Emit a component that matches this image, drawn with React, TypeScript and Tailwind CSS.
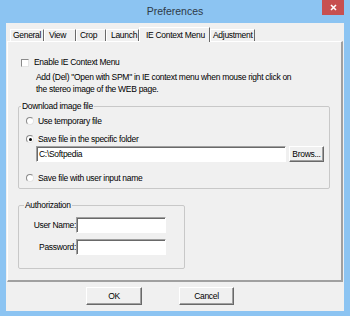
import React from 'react';

// classic win32 dialog, tabs + group boxes

const tabs = [
  { label: 'General', cls: 'w-[34px] pl-[2px]' },
  { label: 'View', cls: 'w-[32px] pl-[4px]' },
  { label: 'Crop', cls: 'w-[30px] pl-[3px]' },
  { label: 'Launch', cls: 'w-[33px] pl-[4px]' },
  { label: 'Adjustment', cls: 'w-[45px] pl-[2px]' },
];

function Tab({ label, cls }: { label: string; cls: string }) {
  return (
    <div className={`${cls} h-[12px] flex items-center leading-none whitespace-nowrap border-t border-l border-r border-t-white border-l-white border-r-[#696969]`}>
      {label}
    </div>
  );
}

function Radio({ checked }: { checked?: boolean }) {
  return (
    <div className="w-[8px] h-[8px] rounded-full bg-white border border-t-[#8a8a8a] border-l-[#8a8a8a] border-b-[#e4e4e4] border-r-[#e4e4e4] flex items-center justify-center shrink-0">
      {checked && <div className="w-[3px] h-[3px] rounded-full bg-black" />}
    </div>
  );
}

function Btn({ label, cls }: { label: string; cls: string }) {
  return (
    <div className={`${cls} flex items-center justify-center leading-none bg-[#f0f0f0] border border-t-white border-l-white border-b-[#696969] border-r-[#696969] shadow-[inset_-1px_-1px_0_#a0a0a0]`}>
      {label}
    </div>
  );
}

function Field({ cls, value }: { cls: string; value?: string }) {
  return (
    <div className={`${cls} bg-white flex items-center pl-[2px] leading-none border border-t-[#a0a0a0] border-l-[#a0a0a0] border-b-white border-r-white shadow-[inset_1px_1px_0_#696969]`}>
      {value}
    </div>
  );
}

export default function App() {
  return (
    <div className="w-[350px] h-[316px] bg-[#8cc4f2] flex flex-col overflow-hidden font-['Liberation_Sans',Arial,sans-serif] text-[8.5px] tracking-[-0.3px] text-black">
      <div className="h-[23px] flex items-start shrink-0">
        <div className="w-[28px]" />
        <div className="flex-1 text-center text-[10.5px] tracking-normal leading-[23px] text-[#2e3a46]">
          Preferences
        </div>
        <div className="w-[22px] h-[15px] bg-[#c75050] flex items-center justify-center">
          <svg width="7" height="7" viewBox="0 0 7 7">
            <path d="M1 1L6 6M6 1L1 6" stroke="white" strokeWidth="1.6" />
          </svg>
        </div>
        <div className="w-[6px]" />
      </div>

      <div className="mx-[6px] h-[288px] bg-[#f0f0f0] flex flex-col shrink-0">
        <div className="h-[18px] flex items-end pl-[4px]">
          {tabs.slice(0, 4).map((t) => (
            <Tab key={t.label} label={t.label} cls={t.cls} />
          ))}
          <div className="relative z-10 -mb-px w-[71px] h-[15px] pl-[6px] flex items-center leading-none whitespace-nowrap bg-[#f0f0f0] border-t border-l border-r border-t-white border-l-white border-r-[#696969]">
            IE Context Menu
          </div>
          <Tab label={tabs[4].label} cls={tabs[4].cls} />
        </div>

        <div className="ml-[1px] w-[336px] h-[241px] flex flex-col border-t border-l border-r-2 border-b-2 border-t-white border-l-white border-r-[#a0a0a0] border-b-[#a0a0a0]">
          <div className="mt-[15px] ml-[13px] h-[11px] flex items-center gap-[5px] leading-[11px]">
            <div className="w-[8px] h-[8px] bg-white border border-t-[#8a8a8a] border-l-[#8a8a8a] border-b-[#e4e4e4] border-r-[#e4e4e4]" />
            <span>Enable IE Context Menu</span>
          </div>
          <div className="mt-[4px] ml-[28px] leading-[11.5px] whitespace-nowrap">
            Add (Del) "Open with SPM" in IE context menu when mouse right click on
            <br />
            the stereo image of the WEB page.
          </div>

          <fieldset className="mt-[5.5px] ml-[10px] w-[312px] min-w-0 border border-[#c8c8c8] rounded-[2px] pb-[4.5px]">
            <legend className="ml-[2px] px-[1px] leading-[11px]">Download image file</legend>
            <div className="flex flex-col">
              <div className="mt-[4px] ml-[7px] h-[11px] flex items-center gap-[4px] leading-[11px]">
                <Radio />
                <span>Use temporary file</span>
              </div>
              <div className="mt-[7px] ml-[7px] h-[11px] flex items-center gap-[4px] leading-[11px]">
                <Radio checked />
                <span>Save file in the specific folder</span>
              </div>
              <div className="mt-[1.5px] ml-[17px] h-[16px] flex">
                <Field cls="w-[250px] h-[16px]" value={'C:\\Softpedia'} />
                <Btn label="Brows..." cls="ml-[3px] w-[35px] h-[16px]" />
              </div>
              <div className="mt-[10.5px] ml-[7px] h-[11px] flex items-center gap-[4px] leading-[11px]">
                <Radio />
                <span>Save file with user input name</span>
              </div>
            </div>
          </fieldset>

          <fieldset className="mt-[10.5px] ml-[10px] w-[167px] min-w-0 border border-[#c8c8c8] rounded-[2px] pb-[13px]">
            <legend className="ml-[5px] px-[1px] leading-[11px]">Authorization</legend>
            <div className="flex flex-col">
              <div className="mt-[6.5px] h-[16px] flex items-center">
                <span className="w-[57px] text-right leading-none">User Name:</span>
                <Field cls="w-[90px] h-[16px]" />
              </div>
              <div className="mt-[6px] h-[16px] flex items-center">
                <span className="w-[57px] text-right leading-none">Password:</span>
                <Field cls="w-[90px] h-[16px]" />
              </div>
            </div>
          </fieldset>
        </div>

        <div className="mt-[5px] pl-[80px] flex gap-[37px]">
          <Btn label="OK" cls="w-[56px] h-[18px]" />
          <Btn label="Cancel" cls="w-[55px] h-[18px]" />
        </div>
      </div>
    </div>
  );
}
